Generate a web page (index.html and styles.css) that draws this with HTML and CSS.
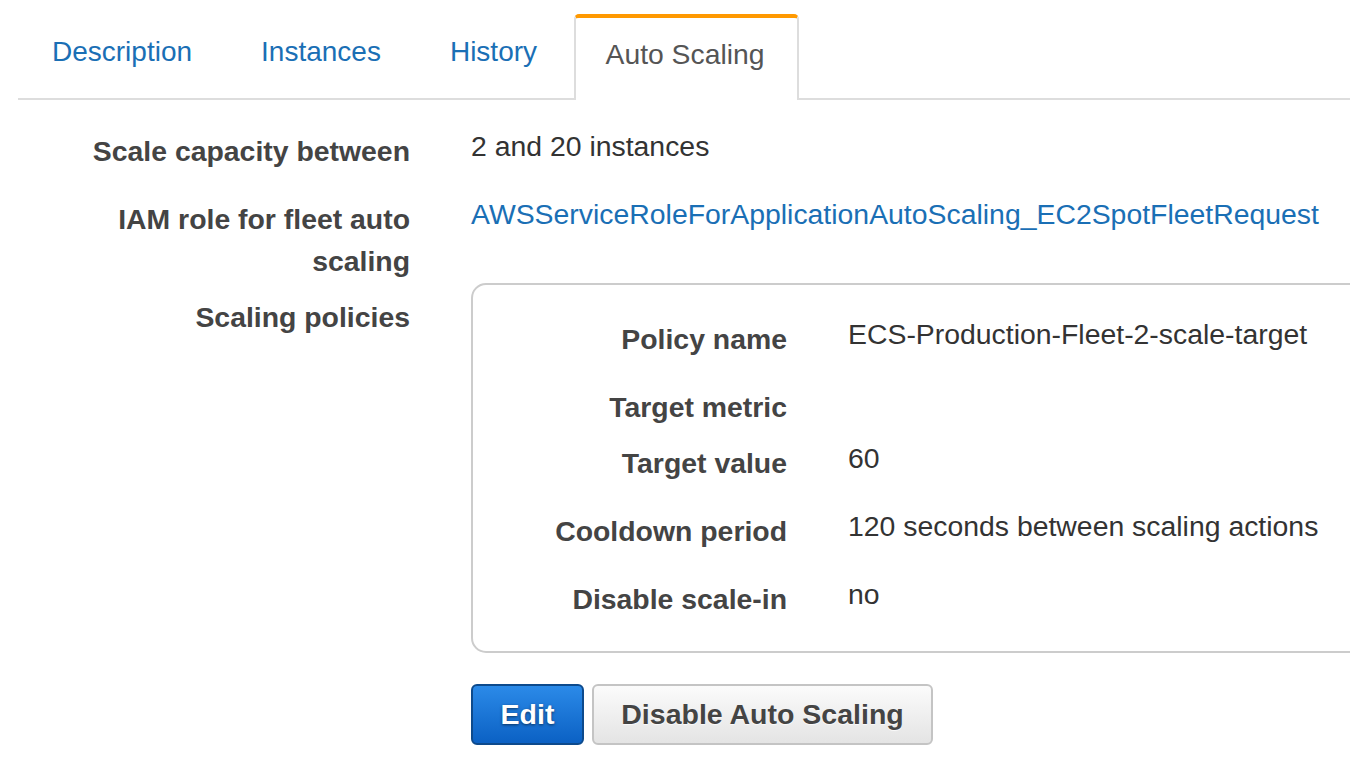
FILE: index.html
```html
<!DOCTYPE html>
<html>
<head>
<meta charset="utf-8">
<link rel="stylesheet" href="styles.css">
</head>
<body>
<div class="page">
  <div class="tabs">
    <div class="tab tab-first">Description</div>
    <div class="tab">Instances</div>
    <div class="tab">History</div>
    <div class="tab tab-active">Auto Scaling</div>
  </div>
  <div class="details">
    <div class="row">
      <div class="label">Scale capacity between</div>
      <div class="value">2 and 20 instances</div>
    </div>
    <div class="row">
      <div class="label">IAM role for fleet auto scaling</div>
      <div class="value"><a class="link">AWSServiceRoleForApplicationAutoScaling_EC2SpotFleetRequest</a></div>
    </div>
    <div class="row">
      <div class="label">Scaling policies</div>
      <div class="value value-panel">
        <div class="panel">
          <div class="prow">
            <div class="label plabel">Policy name</div>
            <div class="value">ECS-Production-Fleet-2-scale-target</div>
          </div>
          <div class="prow">
            <div class="label plabel">Target metric</div>
            <div class="value value-empty"></div>
          </div>
          <div class="prow">
            <div class="label plabel">Target value</div>
            <div class="value">60</div>
          </div>
          <div class="prow">
            <div class="label plabel">Cooldown period</div>
            <div class="value">120 seconds between scaling actions</div>
          </div>
          <div class="prow">
            <div class="label plabel">Disable scale-in</div>
            <div class="value">no</div>
          </div>
        </div>
        <div class="actions">
          <button class="btn btn-primary">Edit</button>
          <button class="btn btn-default">Disable Auto Scaling</button>
        </div>
      </div>
    </div>
  </div>
</div>
</body>
</html>
```

FILE: styles.css
```css
html, body {
  margin: 0;
  padding: 0;
  background: #ffffff;
  overflow: hidden;
}
body {
  font-family: "Liberation Sans", Arial, sans-serif;
  font-size: 28.4px;
  color: #333333;
}
.page {
  padding-left: 18px;
}
.tabs {
  display: flex;
  align-items: flex-end;
  margin-top: 14px;
  height: 84px;
  border-bottom: 2px solid #dddddd;
  font-size: 28px;
}
.tab {
  padding: 18px 34.5px 26px;
  line-height: 40px;
  color: #1a6fb5;
  white-space: nowrap;
}
.tab-first {
  padding-left: 34px;
}
.tab-active {
  margin-left: 2px;
  margin-bottom: -2px;
  padding: 16px 33px 26px 30px;
  border: 2px solid #dddddd;
  border-top: 4px solid #ff9900;
  border-bottom: none;
  border-radius: 5px 5px 0 0;
  background: #ffffff;
  color: #555555;
  font-size: 28.3px;
}
.details {
  margin-top: 24px;
}
.row {
  display: grid;
  grid-template-columns: 392px minmax(0, 1fr);
  column-gap: 61px;
}
.label {
  padding: 6px 0 8px;
  line-height: 42px;
  font-weight: bold;
  color: #444444;
  text-align: right;
}
.value {
  padding: 1px 0 25px;
  line-height: 42px;
  color: #333333;
  white-space: nowrap;
}
.value-empty {
  padding: 0;
}
.link {
  color: #1a6fb5;
  text-decoration: none;
}
.value-panel {
  padding: 0;
  margin-top: -7px;
  overflow: hidden;
}
.panel {
  width: calc(100% + 40px);
  box-sizing: border-box;
  border: 2px solid #cccccc;
  border-radius: 15px;
  padding: 27px 0 11px;
}
.prow {
  display: grid;
  grid-template-columns: 314px minmax(0, 1fr);
  column-gap: 61px;
}
.actions {
  display: flex;
  gap: 8px;
  margin-top: 31px;
}
.btn {
  font-family: "Liberation Sans", Arial, sans-serif;
  font-size: 28.5px;
  font-weight: bold;
  height: 61px;
  border-radius: 6px;
  border: 2px solid;
  line-height: 57px;
  padding: 0;
  cursor: pointer;
}
.btn-primary {
  width: 113px;
  color: #ffffff;
  background: linear-gradient(#2b8ae8, #0b61c4);
  border-color: #0d4a8c;
  text-shadow: 0 1px 3px rgba(0, 0, 0, 0.55);
}
.btn-default {
  width: 341px;
  color: #444444;
  background: linear-gradient(#fbfbfb, #e4e4e4);
  border-color: #c4c4c4;
  text-shadow: 0 1px 1px rgba(255, 255, 255, 0.8);
}
```
